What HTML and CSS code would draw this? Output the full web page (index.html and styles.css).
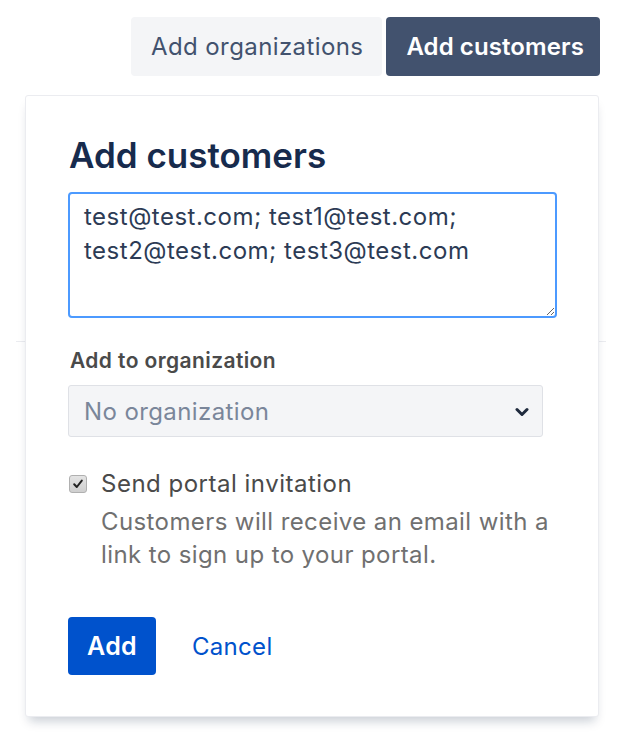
FILE: index.html
```html
<!DOCTYPE html>
<html lang="en">
<head>
<meta charset="utf-8">
<title>Add customers</title>
<link rel="stylesheet" href="styles.css">
</head>
<body>
<div class="page">
  <div class="tabs">
    <button class="tab">Add organizations</button>
    <button class="tab tab-active">Add customers</button>
  </div>
  <div class="card">
    <h1 class="title">Add customers</h1>
    <textarea class="emails">test@test.com; test1@test.com; test2@test.com; test3@test.com</textarea>
    <div class="label">Add to organization</div>
    <div class="select">
      <span class="select-text">No organization</span>
      <svg class="chevron" width="14" height="10" viewBox="0 0 14 10"><path d="M2 2.5 L7 7.5 L12 2.5" fill="none" stroke="#1f2a3d" stroke-width="3" stroke-linecap="round" stroke-linejoin="round"/></svg>
    </div>
    <div class="check-row">
      <span class="checkbox"><svg width="12" height="12" viewBox="0 0 12 12"><path d="M2.2 6.2 L4.8 9 L9.8 2.6" fill="none" stroke="#222" stroke-width="2" stroke-linecap="round" stroke-linejoin="round"/></svg></span>
      <div class="check-text">
        <div class="check-label">Send portal invitation</div>
        <div class="check-desc">Customers will receive an email with a link to sign up to your portal.</div>
      </div>
    </div>
    <div class="actions">
      <button class="btn-primary">Add</button>
      <button class="btn-link">Cancel</button>
    </div>
  </div>
</div>
</body>
</html>
```
FILE: styles.css
```css
html, body {
  margin: 0;
  padding: 0;
  background: #ffffff;
}
body {
  font-family: Inter, "Noto Sans", "Liberation Sans", sans-serif;
  color: #172b4d;
}
.page {
  position: relative;
  width: 618px;
  height: 736px;
  overflow: hidden;
}
.page::before {
  content: "";
  position: absolute;
  left: 16px;
  right: 12px;
  top: 341px;
  height: 1px;
  background: #ebecf0;
}
.tabs {
  display: flex;
  justify-content: flex-end;
  gap: 4px;
  padding: 17px 18px 0 0;
}
.tab {
  height: 59px;
  padding: 0 19px 0 20px;
  border: none;
  border-radius: 4px;
  background: #f4f5f7;
  color: #42526e;
  font-family: inherit;
  font-size: 24px;
  font-weight: 400;
  letter-spacing: 0.4px;
  cursor: pointer;
}
.tab-active {
  background: #42526e;
  color: #ffffff;
  font-weight: 600;
  letter-spacing: 0.1px;
  padding: 0 16px 0 20px;
}
.card {
  position: relative;
  box-sizing: border-box;
  width: 574px;
  margin: 19px 0 0 25px;
  padding: 39px 41px 41px 42px;
  background: #ffffff;
  border: 1px solid #ebecf0;
  border-radius: 3px;
  box-shadow: 0 8px 10px -4px rgba(9, 30, 66, 0.22);
  display: flex;
  flex-direction: column;
}
.title {
  margin: 0 0 17px 0;
  font-size: 35px;
  line-height: 40px;
  font-weight: 600;
  color: #172b4d;
  padding-left: 1px;
}
.emails {
  box-sizing: border-box;
  width: 489px;
  height: 126px;
  margin: 0;
  padding: 6px 14px;
  border: 2px solid #4c9aff;
  border-radius: 4px;
  font-family: inherit;
  font-size: 24px;
  letter-spacing: 0.5px;
  line-height: 34px;
  color: #2c3b55;
  outline: none;
  resize: both;
  background: #ffffff;
}
.label {
  margin-top: 31px;
  font-size: 21px;
  letter-spacing: 0.4px;
  line-height: 24px;
  font-weight: 600;
  color: #4a4a4a;
  padding-left: 2px;
}
.select {
  box-sizing: border-box;
  width: 475px;
  height: 52px;
  margin-top: 12px;
  padding: 0 13px 0 15px;
  display: flex;
  align-items: center;
  justify-content: space-between;
  background: #f4f5f7;
  border: 1px solid #dfe1e6;
  border-radius: 3px;
}
.select-text {
  font-size: 24px;
  letter-spacing: 0.4px;
  color: #7a869a;
}
.chevron {
  display: block;
  margin-top: 2px;
}
.check-row {
  margin-top: 30px;
  display: flex;
  align-items: flex-start;
  gap: 14px;
}
.checkbox {
  flex: none;
  box-sizing: border-box;
  width: 18px;
  height: 18px;
  margin-top: 8px;
  margin-left: 1px;
  border: 1px solid #b0b0b0;
  border-radius: 3px;
  background: linear-gradient(#e4e4e4, #cfcfcf);
  display: flex;
  align-items: center;
  justify-content: center;
}
.checkbox svg {
  display: block;
}
.check-label {
  font-size: 24px;
  letter-spacing: 0.5px;
  line-height: 34px;
  color: #4a4a4a;
}
.check-desc {
  margin-top: 4px;
  font-size: 24px;
  letter-spacing: 0.4px;
  line-height: 33px;
  color: #707070;
}
.actions {
  margin-top: 46px;
  display: flex;
  align-items: center;
  gap: 36px;
}
.btn-primary {
  width: 88px;
  height: 58px;
  padding: 0;
  border: none;
  border-radius: 4px;
  background: #0052cc;
  color: #ffffff;
  font-family: inherit;
  font-size: 25px;
  letter-spacing: 0.3px;
  font-weight: 600;
  cursor: pointer;
}
.btn-link {
  padding: 0;
  border: none;
  background: none;
  color: #0052cc;
  font-family: inherit;
  font-size: 24px;
  letter-spacing: 0.3px;
  font-weight: 400;
  cursor: pointer;
}
```
